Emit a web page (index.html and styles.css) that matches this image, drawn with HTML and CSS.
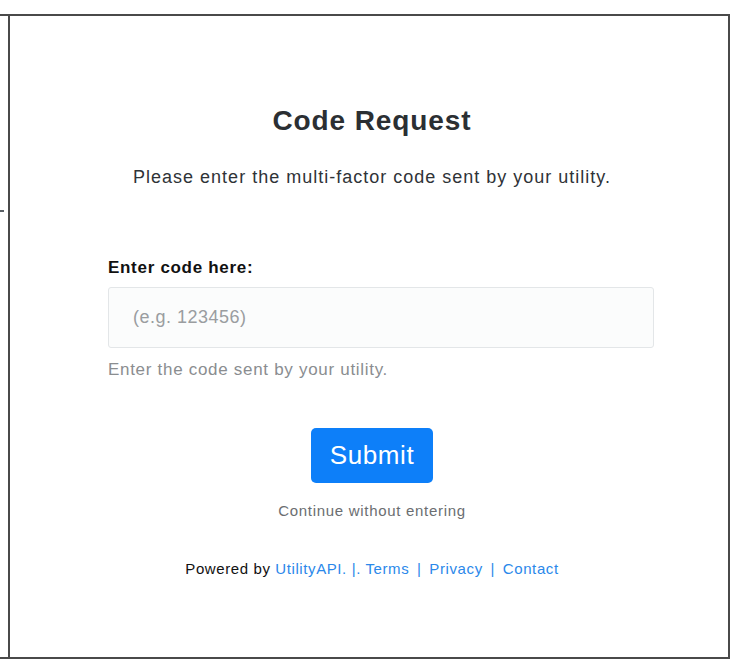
FILE: index.html
```html
<!DOCTYPE html>
<html lang="en">
<head>
<meta charset="utf-8">
<title>Code Request</title>
<link rel="stylesheet" href="styles.css">
</head>
<body>
<div class="frame">
  <div class="gutter"><span class="dash"></span></div>
  <div class="panel">
    <h1 class="title">Code Request</h1>
    <p class="subtitle">Please enter the multi-factor code sent by your utility.</p>
    <form class="form">
      <label class="label" for="code">Enter code here:</label>
      <input class="input" id="code" type="text" placeholder="(e.g. 123456)">
      <p class="help">Enter the code sent by your utility.</p>
      <div class="actions">
        <button class="submit" type="button">Submit</button>
        <a class="skip" href="#">Continue without entering</a>
      </div>
    </form>
    <p class="footer">Powered by <a href="#">UtilityAPI.</a> <a href="#">|.</a> <a href="#">Terms</a> <span class="sep">|</span> <a href="#">Privacy</a> <span class="sep">|</span> <a href="#">Contact</a></p>
  </div>
</div>
</body>
</html>
```
FILE: styles.css
```css
html, body {
  margin: 0;
  padding: 0;
  background: #ffffff;
}
body {
  font-family: "Liberation Sans", Arial, Helvetica, sans-serif;
  color: #2b2f33;
}
.frame {
  margin-top: 14px;
  width: 728px;
  height: 641px;
  display: flex;
  border-top: 2px solid #4a4a4a;
  border-bottom: 2px solid #4a4a4a;
  border-right: 2px solid #4a4a4a;
}
.gutter {
  width: 8px;
  flex: none;
  display: flex;
  flex-direction: column;
  padding-top: 194px;
}
.dash {
  display: block;
  width: 4px;
  height: 2px;
  background: #5a6066;
}
.panel {
  flex: 1;
  border-left: 2px solid #4a4a4a;
  display: flex;
  flex-direction: column;
  align-items: center;
  padding-top: 89px;
  padding-left: 6px;
}
.title {
  margin: 0;
  font-size: 28px;
  line-height: 32px;
  font-weight: 700;
  letter-spacing: 0.9px;
  color: #2b2f33;
}
.subtitle {
  margin: 30px 0 0;
  font-size: 18px;
  line-height: 20px;
  letter-spacing: 1px;
  color: #2f3337;
}
.form {
  width: 546px;
  margin: 71px 0 0 18px;
  display: flex;
  flex-direction: column;
}
.label {
  font-size: 17px;
  line-height: 20px;
  font-weight: 700;
  letter-spacing: 0.7px;
  color: #111;
}
.input {
  margin-top: 9px;
  height: 61px;
  box-sizing: border-box;
  border: 1px solid #e3e6e8;
  border-radius: 3px;
  background: #fbfcfc;
  padding: 0 24px;
  font-family: inherit;
  font-size: 18px;
  letter-spacing: 0.5px;
  color: #333;
}
.input::placeholder {
  color: #9a9da0;
}
.help {
  margin: 12px 0 0;
  font-size: 17px;
  line-height: 20px;
  letter-spacing: 0.7px;
  color: #8a8d90;
}
.actions {
  margin-top: 48px;
  display: flex;
  flex-direction: column;
  align-items: center;
  margin-right: 18px;
}
.submit {
  width: 122px;
  height: 55px;
  border: none;
  border-radius: 5px;
  background: #0d7ff9;
  color: #fff;
  font-family: inherit;
  font-size: 26px;
  letter-spacing: 0.6px;
  padding: 0;
}
.skip {
  margin-top: 19px;
  font-size: 15px;
  line-height: 18px;
  letter-spacing: 0.7px;
  color: #6b6e71;
  text-decoration: none;
}
.footer {
  margin: 40px 0 0;
  font-size: 15px;
  line-height: 18px;
  letter-spacing: 0.6px;
  color: #111;
}
.footer a, .footer .sep {
  color: #2b88ea;
  text-decoration: none;
}
.footer .sep {
  margin: 0 3px;
}
```
